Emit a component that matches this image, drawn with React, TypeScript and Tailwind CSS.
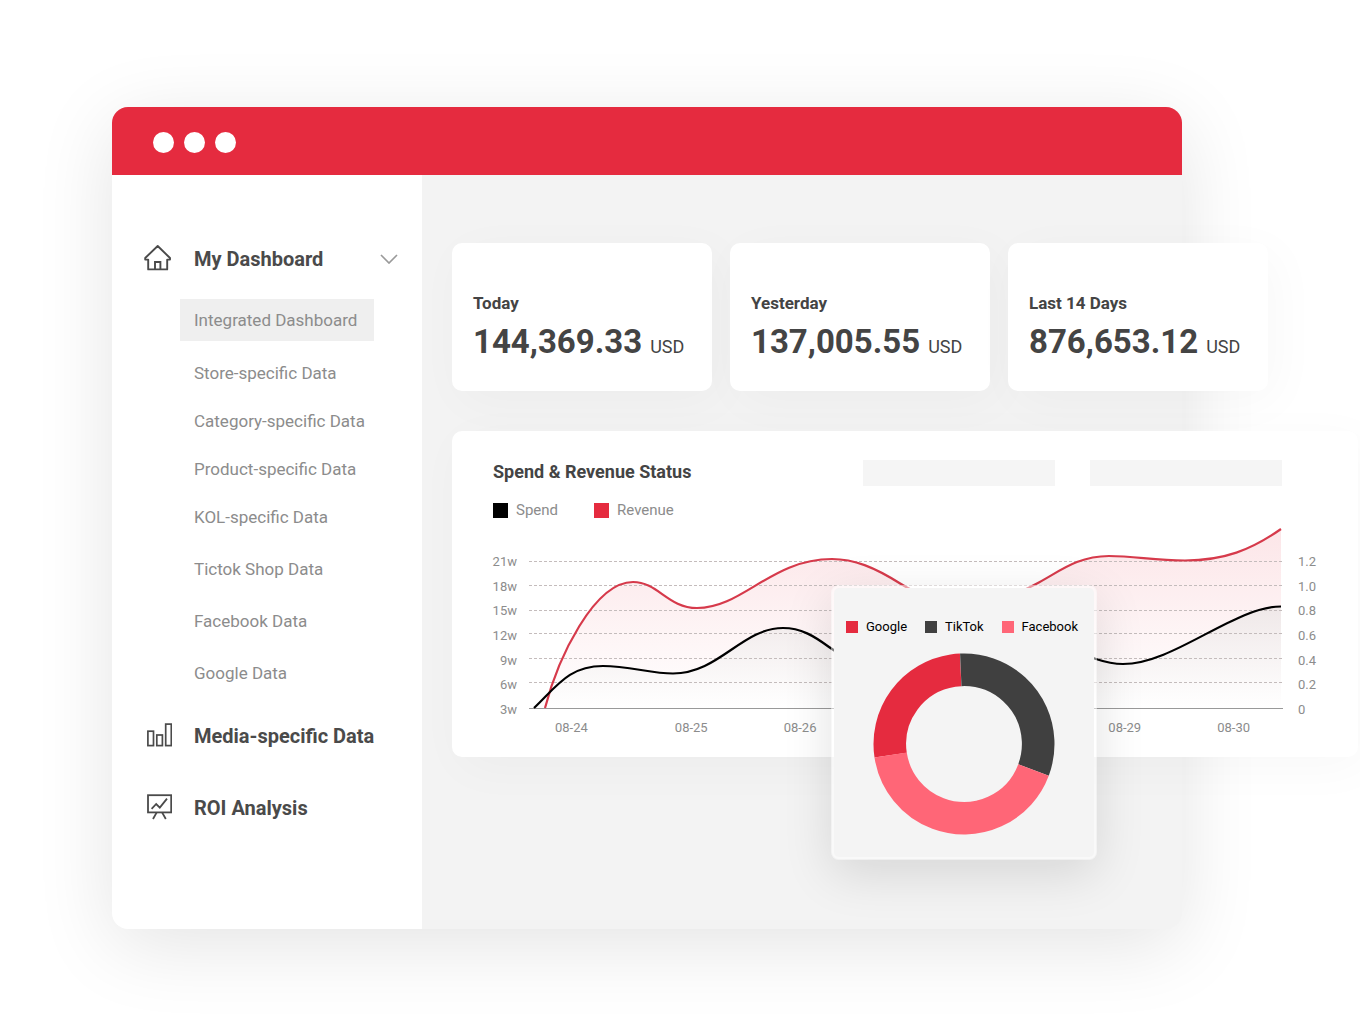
import { clsx } from 'clsx';

const compactItems = [
  'Store-specific Data',
  'Category-specific Data',
  'Product-specific Data',
  'KOL-specific Data',
];

const channelItems = ['Tictok Shop Data', 'Facebook Data', 'Google Data'];

const stats = [
  { label: 'Today', value: '144,369.33' },
  { label: 'Yesterday', value: '137,005.55' },
  { label: 'Last 14 Days', value: '876,653.12' },
];

const leftAxis = ['21w', '18w', '15w', '12w', '9w', '6w', '3w'];
const rightAxis = ['1.2', '1.0', '0.8', '0.6', '0.4', '0.2', '0'];
const gridLines = [41, 65, 90, 113, 138, 162];

const REVENUE =
  'M16 188 C29 138 65 62 104 62 C129 62 139 88 168 88 C214 88 242 39 303 39 C325 39 345 47 372 64 C410 88 460 90 507 64 C530 52 548 36 580 36 C606 36 625 40.5 656 40.5 C695 40.5 722 30 752 9';
const SPEND =
  'M5 188 C28 166 40 146 74 146 C100 146 122 153.5 144 153.5 C190 153.5 213 108 254 108 C272 108 285 116 300 127 C380 185 500 110 567 139 C576 142 583 144 594 144 C645 144 705 86.5 752 86.5';

const channels = [
  { name: 'Google', swatch: 'bg-[#e52b3f]', stroke: '#e52b3f', start: 171.4, sweep: 96.1 },
  { name: 'TikTok', swatch: 'bg-[#404040]', stroke: '#404040', start: -92.5, sweep: 113 },
  { name: 'Facebook', swatch: 'bg-[#ff6677]', stroke: '#ff6677', start: 20.5, sweep: 150.9 },
];

function HomeIcon() {
  return (
    <svg viewBox="0 0 28 28" className="h-7 w-7" fill="none" stroke="#4a4a4a" strokeWidth="1.9" aria-hidden="true">
      <path d="M13.7 1 L26 13 V14.6 H23.2 V24.4 H4.2 V14.6 H1.2 V13 Z" strokeLinejoin="round" />
      <path d="M11 24.4 V17 H16.4 V24.4" />
    </svg>
  );
}

function BarsIcon() {
  return (
    <svg viewBox="0 0 28 28" className="h-7 w-7" fill="none" stroke="#4a4a4a" strokeWidth="1.7" aria-hidden="true">
      <rect x="3.9" y="9.2" width="5.6" height="14.4" />
      <rect x="12.8" y="13" width="5.6" height="10.6" />
      <rect x="21.7" y="2.1" width="5.6" height="21.5" />
    </svg>
  );
}

function BoardIcon() {
  return (
    <svg viewBox="0 0 28 28" className="h-7 w-7" fill="none" stroke="#4a4a4a" strokeWidth="1.8" aria-hidden="true">
      <rect x="4" y="1.2" width="23.2" height="17.2" />
      <path d="M7.6 14.8 L12.2 10 L15.8 13.6 L23 4.6" />
      <path d="M12.6 18.6 L9 25 M18.2 18.6 L21.8 25" />
    </svg>
  );
}

function SubItem({ label, className }: { label: string; className: string }) {
  return (
    <li>
      <a href="#" className={clsx('flex items-center px-3.5 text-[17px] text-[#8c8c8c]', className)}>
        {label}
      </a>
    </li>
  );
}

function Sidebar() {
  return (
    <nav className="w-[310px] shrink-0 rounded-bl-2xl bg-white pt-15">
      <button type="button" className="flex h-12 w-full items-center gap-[22px] pr-6 pl-8 text-xl font-bold text-[#4a4a4a]">
        <HomeIcon />
        <span>My Dashboard</span>
        <svg viewBox="0 0 18 10" className="ml-auto h-2.5 w-[18px]" fill="none" stroke="#9a9a9a" strokeWidth="1.7" aria-hidden="true">
          <path d="M1 1 L9 9 L17 1" />
        </svg>
      </button>
      <div className="mt-4 ml-[68px] w-[194px] whitespace-nowrap">
        <ul>
          <SubItem label="Integrated Dashboard" className="mb-[9px] h-[42px] bg-[#efefef] pt-0.5" />
          {compactItems.map((label) => (
            <SubItem key={label} label={label} className="h-12" />
          ))}
        </ul>
        <ul className="mt-0.5">
          {channelItems.map((label) => (
            <SubItem key={label} label={label} className="h-[52px]" />
          ))}
        </ul>
      </div>
      <div className="text-xl font-bold text-[#4a4a4a]">
        <a href="#" className="flex h-[72px] items-center gap-[22px] pl-8">
          <BarsIcon />
          Media-specific Data
        </a>
        <a href="#" className="flex h-[72px] items-center gap-[22px] pl-8">
          <BoardIcon />
          ROI Analysis
        </a>
      </div>
    </nav>
  );
}

function StatCard({ label, value }: { label: string; value: string }) {
  return (
    <div className="flex h-[148px] flex-1 flex-col rounded-[10px] bg-white px-[21px] pt-12 whitespace-nowrap text-[#444] shadow-[8px_10px_50px_rgba(0,0,0,0.03)]">
      <p className="text-[17px] leading-6 font-bold">{label}</p>
      <p className="mt-1 flex items-baseline gap-2">
        <span className="text-[33px] leading-[46px] font-bold">{value}</span>
        <span className="text-lg">USD</span>
      </p>
    </div>
  );
}

function AxisLabels({ labels, className }: { labels: string[]; className: string }) {
  return (
    <div className={clsx('mt-8 flex h-[168px] flex-col justify-between text-[13px] leading-5 text-[#8c8c8c]', className)}>
      {labels.map((label) => (
        <span key={label}>{label}</span>
      ))}
    </div>
  );
}

function TrendChart() {
  return (
    <svg viewBox="0 0 754 190" preserveAspectRatio="none" className="block h-[190px] w-full" fill="none" role="img" aria-label="Spend and revenue by day">
      <defs>
        <linearGradient id="revenueFill" x1="0" y1="0" x2="0" y2="1">
          <stop offset="0" stopColor="#e52b3f" stopOpacity="0.12" />
          <stop offset="1" stopColor="#e52b3f" stopOpacity="0" />
        </linearGradient>
        <linearGradient id="spendFill" x1="0" y1="0" x2="0" y2="1">
          <stop offset="0" stopColor="#ece6e6" />
          <stop offset="1" stopColor="#ffffff" />
        </linearGradient>
      </defs>
      <path d={`${REVENUE} V188 Z`} fill="url(#revenueFill)" />
      <path d={`${SPEND} V188 Z`} fill="url(#spendFill)" fillOpacity="0.8" />
      {gridLines.map((y) => (
        <line key={y} x1="0" x2="754" y1={y + 0.5} y2={y + 0.5} stroke="#c4bcbc" strokeDasharray="3 2" />
      ))}
      <line x1="0" x2="754" y1="188.5" y2="188.5" stroke="#999" />
      <path d={REVENUE} stroke="#d63a4b" strokeWidth="2.2" />
      <path d={SPEND} stroke="#000" strokeWidth="2.2" />
    </svg>
  );
}

function ChannelCard() {
  return (
    <div className="absolute top-[154px] left-[379px] w-[266px] rounded-lg border-3 border-white/50 bg-[#f4f4f4] bg-clip-padding pt-[29px] pb-[22px] shadow-[0_14px_50px_rgba(0,0,0,0.12)]">
      <ul className="flex justify-between pr-4 pl-3 text-[13px] leading-5 text-black">
        {channels.map((c) => (
          <li key={c.name} className="flex items-center gap-2">
            <span className={clsx('size-3', c.swatch)} />
            {c.name}
          </li>
        ))}
      </ul>
      <svg viewBox="0 0 182 182" className="mx-auto mt-4 block size-[182px]" fill="none" role="img" aria-label="Share by channel">
        {channels.map((c) => (
          <circle
            key={c.name}
            cx="91"
            cy="91"
            r="74.2"
            pathLength={360}
            stroke={c.stroke}
            strokeWidth="32.6"
            strokeDasharray={`${c.sweep} ${360 - c.sweep}`}
            transform={`rotate(${c.start} 91 91)`}
          />
        ))}
      </svg>
    </div>
  );
}

function StatusPanel() {
  return (
    <section className="relative mt-10 -mr-[176px] h-[326px] rounded-[10px] bg-white pt-[29px] pr-9 pl-[41px] shadow-[8px_10px_50px_rgba(0,0,0,0.03)]">
      <div className="flex items-start">
        <h2 className="text-lg leading-6 font-bold text-[#444]">Spend &amp; Revenue Status</h2>
        <div className="mr-10 ml-auto flex gap-[35px]">
          <div className="h-[26px] w-48 bg-[#f5f5f5]" />
          <div className="h-[26px] w-48 bg-[#f5f5f5]" />
        </div>
      </div>
      <ul className="mt-3 flex h-6 items-center gap-9 text-[15px] text-[#8c8c8c]">
        <li className="flex items-center gap-2">
          <span className="size-[15px] bg-black" />
          Spend
        </li>
        <li className="flex items-center gap-2">
          <span className="size-[15px] bg-[#e52b3f]" />
          Revenue
        </li>
      </ul>
      <div className="-mt-0.5 flex">
        <AxisLabels labels={leftAxis} className="mr-3 w-6 items-end" />
        <div className="min-w-0 flex-1">
          <TrendChart />
          <div className="flex justify-between pt-2 pr-[33px] pl-[26px] text-[13px] leading-5 text-[#8c8c8c]">
            <div className="flex">
              <span className="mr-[87px]">08-24</span>
              <span className="mr-[76px]">08-25</span>
              <span>08-26</span>
            </div>
            <div className="flex gap-[76px]">
              <span>08-29</span>
              <span>08-30</span>
            </div>
          </div>
        </div>
        <AxisLabels labels={rightAxis} className="ml-[15px] w-6" />
      </div>
      <ChannelCard />
    </section>
  );
}

export default function App() {
  return (
    <div className="min-h-screen overflow-hidden bg-white pt-[107px] pr-[178px] pb-[95px] pl-28 font-['Roboto',sans-serif]">
      <div className="rounded-2xl bg-[#f3f3f3] shadow-[0_16px_80px_rgba(0,0,0,0.11)]">
        <header className="flex h-[68px] items-center gap-2.5 rounded-t-2xl bg-[#e52b3f] pt-[3px] pl-[41px]">
          <span className="size-[21px] rounded-full bg-white" />
          <span className="size-[21px] rounded-full bg-white" />
          <span className="size-[21px] rounded-full bg-white" />
        </header>
        <div className="flex min-h-[754px]">
          <Sidebar />
          <main className="min-w-0 flex-1 pt-[68px] pl-[30px]">
            <div className="-mr-[86px] flex gap-[18px]">
              {stats.map((s) => (
                <StatCard key={s.label} {...s} />
              ))}
            </div>
            <StatusPanel />
          </main>
        </div>
      </div>
    </div>
  );
}
